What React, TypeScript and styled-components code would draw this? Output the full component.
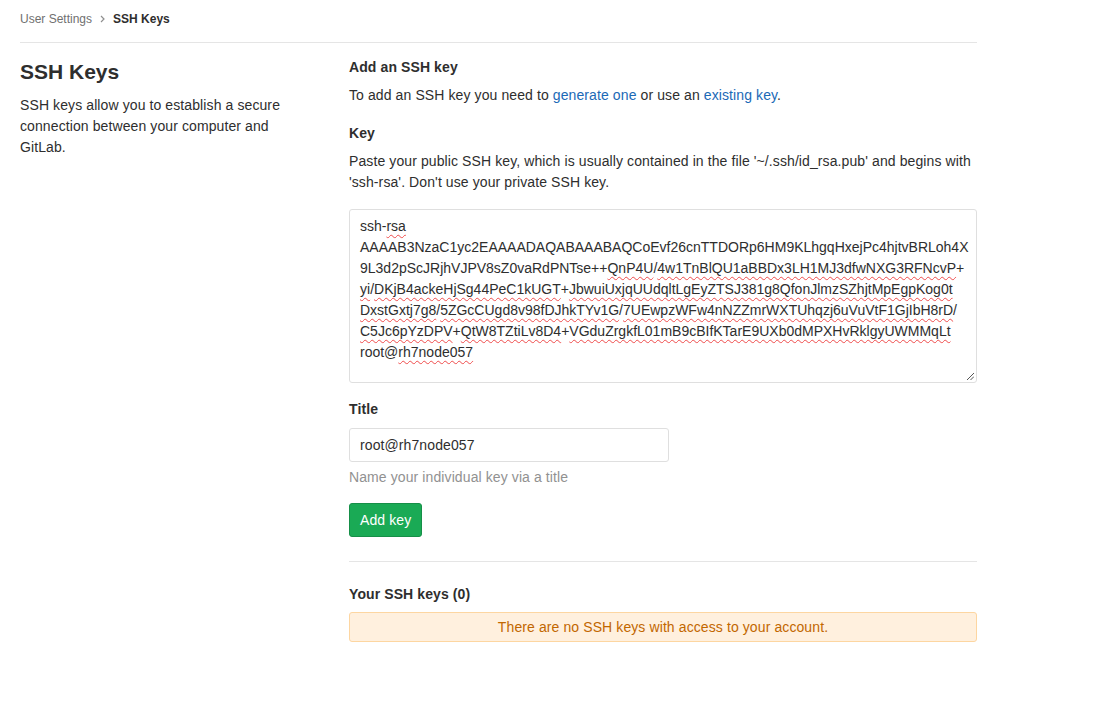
import React from 'react'
import styled, { createGlobalStyle } from 'styled-components'

const GlobalStyle = createGlobalStyle`
  html, body {
    margin: 0;
    padding: 0;
    background: #fff;
  }
  body {
    font-family: "Liberation Sans", Arial, sans-serif;
    font-size: 14px;
    letter-spacing: 0.1px;
    color: #2e2e2e;
  }
`

type Piece = { text: string; typo?: boolean }

// lines as the browser wrapped them, with the spell-check marks
const keyLines: Piece[][] = [
  [{ text: 'ssh-' }, { text: 'rsa', typo: true }],
  [{ text: 'AAAAB3NzaC1yc2EAAAADAQABAAABAQCoEvf26cnTTDORp6HM9KLhgqHxejPc4hjtvBRLoh4X' }],
  [
    { text: '9L3d2pScJRjhVJPV8sZ0vaRdPNTse++' },
    { text: 'QnP4U', typo: true },
    { text: '/' },
    { text: '4w1TnBlQU1aBBDx3LH1MJ3dfwNXG3RFNcvP', typo: true },
    { text: '+' },
  ],
  [
    { text: 'yi', typo: true },
    { text: '/' },
    { text: 'DKjB4ackeHjSg44PeC1kUGT', typo: true },
    { text: '+' },
    { text: 'JbwuiUxjqUUdqltLgEyZTSJ381g8QfonJlmzSZhjtMpEgpKog0t', typo: true },
  ],
  [
    { text: 'DxstGxtj7g8', typo: true },
    { text: '/' },
    { text: '5ZGcCUgd8v98fDJhkTYv1G', typo: true },
    { text: '/' },
    { text: '7UEwpzWFw4nNZZmrWXTUhqzj6uVuVtF1GjIbH8rD', typo: true },
    { text: '/' },
  ],
  [
    { text: 'C5Jc6pYzDPV', typo: true },
    { text: '+' },
    { text: 'QtW8TZtiLv8D4', typo: true },
    { text: '+' },
    { text: 'VGduZrgkfL01mB9cBIfKTarE9UXb0dMPXHvRklgyUWMMqLt', typo: true },
  ],
  [{ text: 'root@' }, { text: 'rh7node057', typo: true }],
]

function Chevron() {
  return (
    <svg width="5" height="8" viewBox="0 0 5 8">
      <path d="M1 1 L4 4 L1 7" fill="none" stroke="#8f8f8f" strokeWidth="1.2" />
    </svg>
  )
}

function ResizeGrip() {
  return (
    <StyledGrip width="7" height="7" viewBox="0 0 7 7">
      <path d="M7 0 L0 7 M7 3.5 L3.5 7" stroke="#555" strokeWidth="1" />
    </StyledGrip>
  )
}

export default function App() {
  return (
    <>
      <GlobalStyle />
      <StyledPage>
        <StyledBreadcrumbs>
          <StyledCrumb>User Settings</StyledCrumb>
          <Chevron />
          <StyledCrumb $current>SSH Keys</StyledCrumb>
        </StyledBreadcrumbs>
        <StyledRow>
          <StyledSidebar>
            <StyledPageTitle>SSH Keys</StyledPageTitle>
            <StyledText>
              SSH keys allow you to establish a secure connection between your computer and GitLab.
            </StyledText>
          </StyledSidebar>
          <StyledMain>
            <StyledSubTitle>Add an SSH key</StyledSubTitle>
            <StyledIntro>
              To add an SSH key you need to <StyledLink href="#">generate one</StyledLink> or use an{' '}
              <StyledLink href="#">existing key</StyledLink>.
            </StyledIntro>
            <StyledLabel $top={16}>Key</StyledLabel>
            <StyledIntro>
              Paste your public SSH key, which is usually contained in the file '~/.ssh/id_rsa.pub' and
              begins with 'ssh-rsa'. Don't use your private SSH key.
            </StyledIntro>
            <StyledKeyBox>
              {keyLines.map((line, i) => (
                <StyledKeyLine key={i}>
                  {line.map((piece, j) =>
                    piece.typo ? <StyledTypo key={j}>{piece.text}</StyledTypo> : piece.text,
                  )}
                </StyledKeyLine>
              ))}
              <ResizeGrip />
            </StyledKeyBox>
            <StyledLabel $top={16}>Title</StyledLabel>
            <StyledInput defaultValue="root@rh7node057" />
            <StyledHelp>Name your individual key via a title</StyledHelp>
            <StyledButton>Add key</StyledButton>
            <StyledDivider />
            <StyledLabel $top={22}>Your SSH keys (0)</StyledLabel>
            <StyledWarning>There are no SSH keys with access to your account.</StyledWarning>
          </StyledMain>
        </StyledRow>
      </StyledPage>
    </>
  )
}

const StyledPage = styled('div')`
  width: 957px;
  margin-left: 20px;
`

const StyledBreadcrumbs = styled('nav')`
  display: flex;
  align-items: center;
  gap: 8px;
  height: 43px;
  box-sizing: border-box;
  padding-bottom: 5px;
  border-bottom: 1px solid #e5e5e5;
  font-size: 12px;
  letter-spacing: 0;
`

const StyledCrumb = styled('span')<{ $current?: boolean }>`
  color: ${(p) => (p.$current ? '#2e2e2e' : '#707070')};
  font-weight: ${(p) => (p.$current ? 700 : 400)};
`

const StyledRow = styled('div')`
  display: grid;
  grid-template-columns: 299px 628px;
  column-gap: 30px;
  padding-top: 14px;
`

const StyledSidebar = styled('div')``

const StyledPageTitle = styled('h4')`
  margin: 3px 0 0;
  font-size: 21px;
  line-height: 24px;
  font-weight: 700;
  color: #2e2e2e;
  letter-spacing: 0;
`

const StyledText = styled('p')`
  margin: 11px 0 0;
  max-width: 290px;
  line-height: 21px;
`

const StyledMain = styled('div')`
  display: flex;
  flex-direction: column;
  align-items: flex-start;
`

const StyledSubTitle = styled('h5')`
  margin: 0;
  font-size: 14px;
  line-height: 20px;
  font-weight: 700;
`

const StyledIntro = styled('p')`
  margin: 8px 0 0;
  line-height: 21.5px;
`

const StyledLink = styled('a')`
  color: #1b69b6;
  text-decoration: none;
`

const StyledLabel = styled('div')<{ $top: number }>`
  margin-top: ${(p) => p.$top}px;
  font-weight: 700;
  line-height: 20px;
`

const StyledKeyBox = styled('div')`
  position: relative;
  margin-top: 15px;
  width: 628px;
  height: 174px;
  box-sizing: border-box;
  padding: 6px 10px;
  border: 1px solid #dfdfdf;
  border-radius: 3px;
  line-height: 21px;
  letter-spacing: 0;
`

const StyledKeyLine = styled('div')`
  white-space: nowrap;
`

const StyledTypo = styled('span')`
  text-decoration: underline wavy #ef4b4b;
  text-decoration-thickness: 1px;
  text-underline-offset: 3px;
`

const StyledGrip = styled('svg')`
  position: absolute;
  right: 2px;
  bottom: 2px;
`

const StyledInput = styled('input')`
  margin-top: 9px;
  width: 320px;
  height: 34px;
  box-sizing: border-box;
  padding: 6px 10px;
  border: 1px solid #dfdfdf;
  border-radius: 3px;
  font-family: inherit;
  font-size: 14px;
  letter-spacing: 0.1px;
  color: #2e2e2e;
  outline: none;
`

const StyledHelp = styled('div')`
  margin-top: 5px;
  line-height: 20px;
  color: #919191;
`

const StyledButton = styled('button')`
  margin-top: 16px;
  height: 34px;
  padding: 0 10px;
  border: 1px solid #168f48;
  border-radius: 3px;
  background: #1aaa55;
  color: #fff;
  font-family: inherit;
  font-size: 14px;
  letter-spacing: 0.1px;
`

const StyledDivider = styled('hr')`
  align-self: stretch;
  margin: 24px 0 0;
  border: 0;
  border-top: 1px solid #e5e5e5;
`

const StyledWarning = styled('div')`
  margin-top: 8px;
  align-self: stretch;
  height: 30px;
  box-sizing: border-box;
  display: flex;
  align-items: center;
  justify-content: center;
  border: 1px solid #fdd6a1;
  border-radius: 3px;
  background: #fff0de;
  color: #c26700;
`
